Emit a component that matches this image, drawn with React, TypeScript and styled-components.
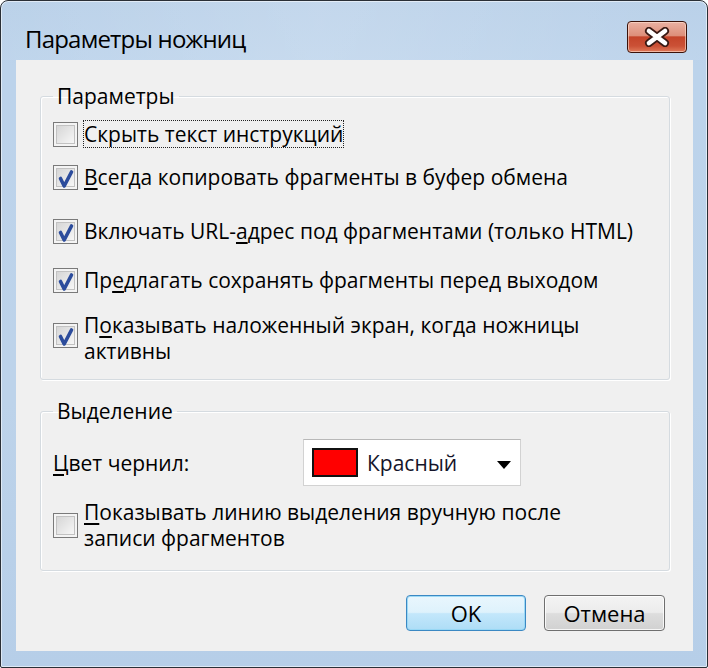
import React from "react";
import styled, { createGlobalStyle } from "styled-components";

const GlobalStyle = createGlobalStyle`
  html, body { margin: 0; padding: 0; background: #ffffff; }
  body { font-family: "Open Sans", "Noto Sans", sans-serif; }
  * { box-sizing: border-box; }
`;

const Window = styled.div`
  width: 708px;
  height: 668px;
  border: 1px solid #2a2f36;
  border-radius: 8px 8px 2px 2px;
  box-shadow: inset 0 0 0 1px rgba(255, 255, 255, 0.55);
  background: linear-gradient(180deg, #b7cfe8 0%, #bcd3eb 10%, #bdd3ea 60%, #b6cee8 100%);
  display: flex;
  flex-direction: column;
  overflow: hidden;
`;

const TitleBar = styled.div`
  height: 59px;
  flex: none;
  display: flex;
  align-items: flex-start;
  justify-content: space-between;
  padding: 0 20px 0 24px;
  background: linear-gradient(90deg, rgba(255,255,255,0.05) 0%, rgba(255,255,255,0.18) 45%, rgba(255,255,255,0.04) 100%);
`;

const Title = styled.div`
  margin-top: 23px;
  font-family: "Open Sans", "Noto Sans", sans-serif;
  font-size: 24px;
  line-height: 30px;
  color: #000;
  letter-spacing: -0.8px;
`;

const CloseButton = styled.div`
  margin-top: 20px;
  width: 60px;
  height: 32px;
  border: 1px solid #3b1209;
  border-radius: 4px;
  background: linear-gradient(180deg, #eab1a2 0%, #dd8f7a 45%, #c4442a 50%, #cb5136 80%, #e07a5a 100%);
  box-shadow: inset 0 0 0 1px rgba(255, 225, 210, 0.6);
  display: flex;
  align-items: center;
  justify-content: center;
`;

const Client = styled.div`
  flex: 1;
  margin: 0 14px 16px 15px;
  background: #f0f0f0;
  padding: 23px 23px 18px 24px;
  display: flex;
  flex-direction: column;
`;

const Group = styled.fieldset<{ $mt?: number; $pt: number; $pb: number }>`
  margin: ${(p) => p.$mt ?? 0}px 0 0 0;
  padding: ${(p) => p.$pt}px 12px ${(p) => p.$pb}px 12px;
  border: 1px solid #d5dbe0;
  border-radius: 3px;
  box-shadow: 1px 1px 0 #ffffff, inset 1px 1px 0 #ffffff;
  min-width: 0;
  display: flex;
  flex-direction: column;
`;

const Legend = styled.legend`
  padding: 0 4px;
  font-size: 21px;
  line-height: 26px;
  color: #000;
`;

const Row = styled.div<{ $mt?: number }>`
  display: flex;
  align-items: center;
  gap: 6px;
  margin-top: ${(p) => p.$mt ?? 0}px;
`;

const Box = styled.span<{ $shift?: number }>`
  flex: none;
  width: 25px;
  height: 25px;
  border: 1px solid #7a7a7a;
  background: #f4f4f4;
  padding: 2px;
  margin-bottom: ${(p) => p.$shift ?? 0}px;
  display: flex;
`;

const BoxInner = styled.span`
  flex: 1;
  border: 1px solid #c2c2c2;
  background: linear-gradient(135deg, #d6d6d6 0%, #e6e6e6 50%, #f7f7f7 100%);
  position: relative;
`;

const CheckSvg = styled.svg`
  position: absolute;
  left: -3px;
  top: -3px;
`;

const Text = styled.span<{ $focus?: boolean }>`
  font-size: 21px;
  line-height: 26px;
  color: #000;
  outline: ${(p) => (p.$focus ? "1px dotted #222" : "none")};
  outline-offset: 0px;
`;

const U = styled.span`
  text-decoration: underline;
  text-underline-offset: 3px;
`;

const ColorRow = styled.div`
  display: grid;
  grid-template-columns: 250px 218px;
  align-items: center;
`;

const Combo = styled.div`
  height: 47px;
  background: #ffffff;
  border: 1px solid #d2d2d2;
  border-top-color: #b8b8b8;
  display: flex;
  align-items: center;
  padding: 0 9px 0 8px;
`;

const Swatch = styled.span<{ $color: string }>`
  width: 46px;
  height: 29px;
  background: ${(p) => p.$color};
  border: 2px solid #111;
  flex: none;
`;

const ComboText = styled.span`
  margin-left: 9px;
  flex: 1;
  font-size: 21px;
  line-height: 26px;
  color: #15152a;
`;

const Arrow = styled.span`
  width: 0;
  height: 0;
  border-left: 7px solid transparent;
  border-right: 7px solid transparent;
  border-top: 8px solid #000;
  margin-top: 4px;
`;

const Buttons = styled.div`
  margin-top: 24px;
  display: flex;
  justify-content: flex-end;
  gap: 18px;
  padding-right: 5px;
`;

const Button = styled.div<{ $primary?: boolean; $w: number }>`
  width: ${(p) => p.$w}px;
  height: 36px;
  border-radius: 4px;
  border: 1px solid ${(p) => (p.$primary ? "#3b88c3" : "#6f6f6f")};
  background: ${(p) =>
    p.$primary
      ? "linear-gradient(180deg, #e9f6fd 0%, #def2fc 48%, #c3e7fb 52%, #aeddf6 100%)"
      : "linear-gradient(180deg, #f3f3f3 0%, #ececec 48%, #dddddd 52%, #d1d1d1 100%)"};
  box-shadow: inset 0 0 0 1px ${(p) => (p.$primary ? "rgba(150,215,245,0.9)" : "rgba(255,255,255,0.8)")};
  display: flex;
  align-items: center;
  justify-content: center;
  font-size: 22px;
  line-height: 26px;
  color: #000;
`;

const Check: React.FC<{ checked?: boolean; shift?: number }> = ({ checked, shift }) => (
  <Box $shift={shift}>
    <BoxInner>
      {checked && (
        <CheckSvg width="25" height="25" viewBox="0 0 25 25">
          <path d="M6.5 12.5 L10.2 20 L17.5 6" fill="none" stroke="#2c4c9c" strokeWidth="3.6" strokeLinecap="round" strokeLinejoin="round" />
        </CheckSvg>
      )}
    </BoxInner>
  </Box>
);

export default function App() {
  return (
    <>
      <GlobalStyle />
      <Window>
        <TitleBar>
          <Title>Параметры ножниц</Title>
          <CloseButton>
            <svg width="28" height="20" viewBox="0 0 28 20">
              <path d="M6 4 L22 16 M22 4 L6 16" stroke="#3a1a14" strokeWidth="8" strokeLinecap="round" />
              <path d="M6 4 L22 16 M22 4 L6 16" stroke="#ffffff" strokeWidth="4.6" strokeLinecap="round" />
            </svg>
          </CloseButton>
        </TitleBar>
        <Client>
          <Group $pt={12} $pb={15}>
            <Legend>Параметры</Legend>
            <Row>
              <Check />
              <Text $focus>Скрыть текст инструкций</Text>
            </Row>
            <Row $mt={17}>
              <Check checked />
              <Text><U>В</U>сегда копировать фрагменты в буфер обмена</Text>
            </Row>
            <Row $mt={28}>
              <Check checked />
              <Text>Включать URL-<U>а</U>дрес под фрагментами (только HTML)</Text>
            </Row>
            <Row $mt={23}>
              <Check checked />
              <Text>Пр<U>е</U>длагать сохранять фрагменты перед выходом</Text>
            </Row>
            <Row $mt={19}>
              <Check checked shift={6} />
              <Text>
                П<U>о</U>казывать наложенный экран, когда ножницы
                <br />
                активны
              </Text>
            </Row>
          </Group>
          <Group $mt={18} $pt={15} $pb={19}>
            <Legend>Выделение</Legend>
            <ColorRow>
              <Text><U>Ц</U>вет чернил:</Text>
              <Combo>
                <Swatch $color="#ff0000" />
                <ComboText>Красный</ComboText>
                <Arrow />
              </Combo>
            </ColorRow>
            <Row $mt={13}>
              <Check />
              <Text>
                <U>П</U>оказывать линию выделения вручную после
                <br />
                записи фрагментов
              </Text>
            </Row>
          </Group>
          <Buttons>
            <Button $primary $w={120}>OK</Button>
            <Button $w={121}>Отмена</Button>
          </Buttons>
        </Client>
      </Window>
    </>
  );
}
